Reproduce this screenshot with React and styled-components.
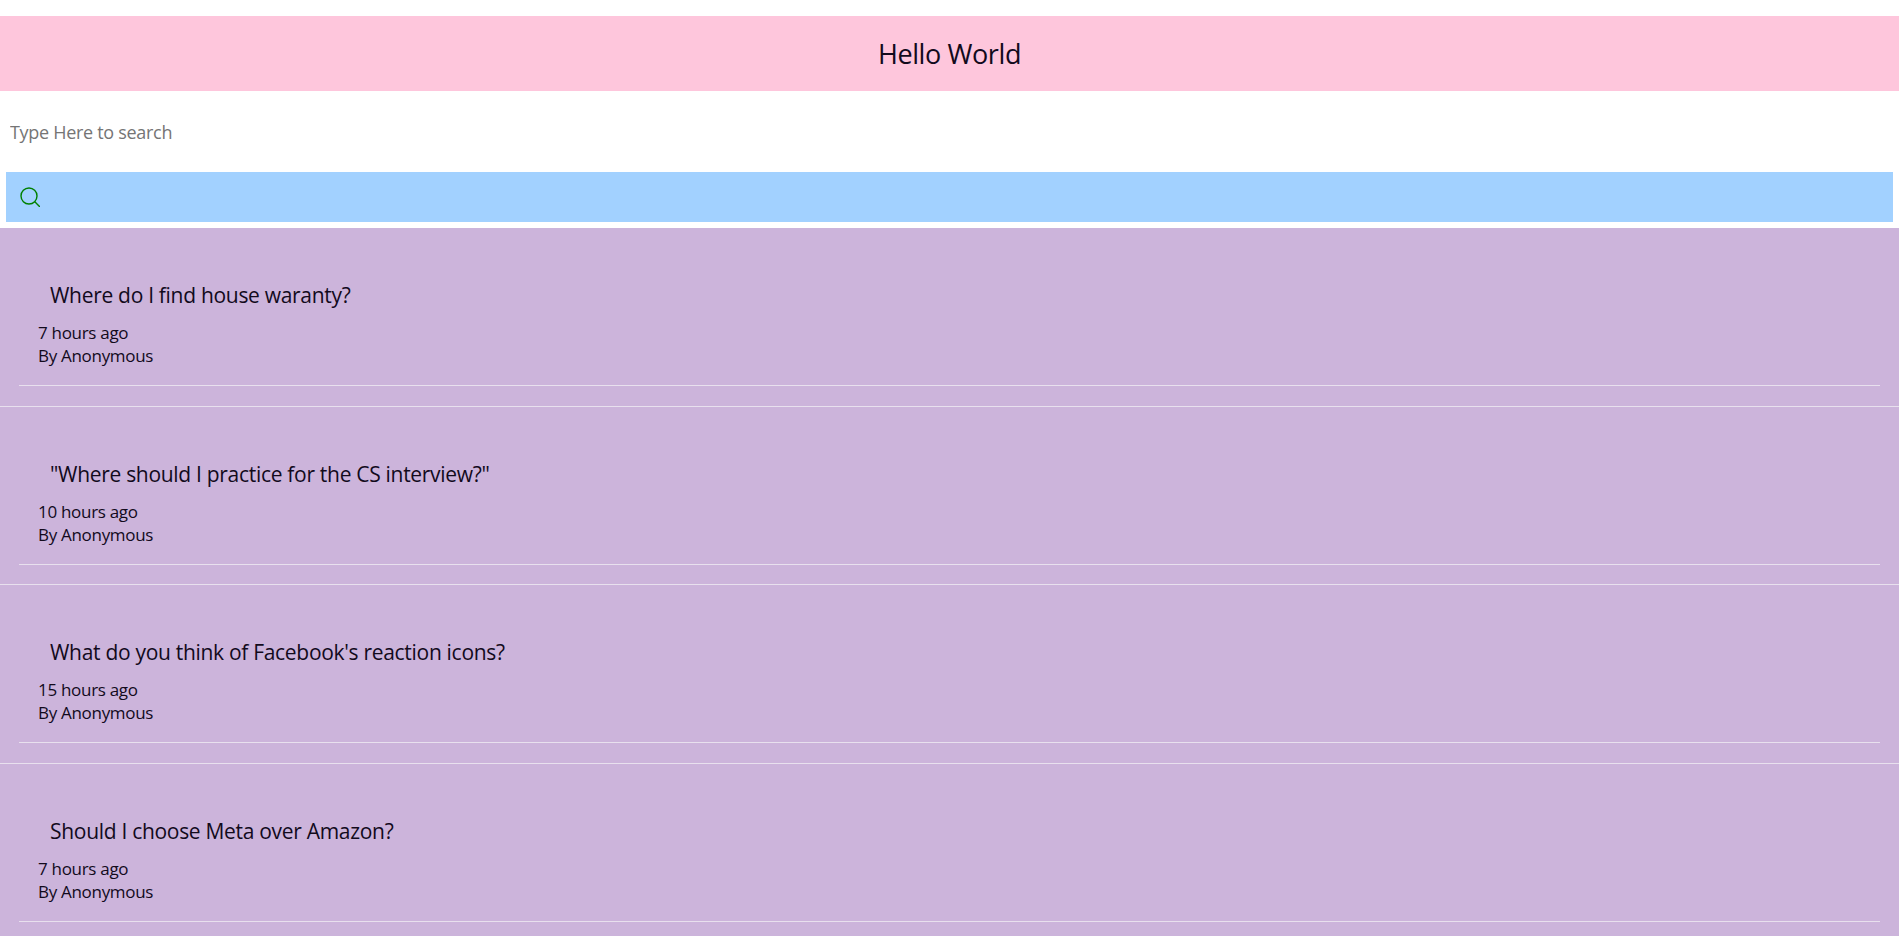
import React from 'react';
import styled, { createGlobalStyle } from 'styled-components';

const GlobalStyle = createGlobalStyle`
  html, body {
    margin: 0;
    padding: 0;
    background: #fff;
    font-family: "Open Sans", "Noto Sans", sans-serif;
    color: #120a1c;
    overflow: hidden;
  }
`;

const Page = styled.div`
  padding-top: 16px;
`;

const Header = styled.header`
  height: 75px;
  background: #fec6dc;
  display: flex;
  align-items: center;
  justify-content: center;
`;

const Title = styled.h1`
  margin: 0;
  font-size: 27px;
  font-weight: 400;
  letter-spacing: -0.4px;
`;

const SearchInput = styled.input`
  display: block;
  width: 100%;
  box-sizing: border-box;
  height: 81px;
  padding: 0 10px;
  border: 0;
  outline: 0;
  background: #fff;
  font: inherit;
  font-size: 18px;
  letter-spacing: -0.3px;

  &::placeholder {
    color: #757575;
    opacity: 1;
  }
`;

const SearchBar = styled.div`
  height: 50px;
  margin: 0 6px 6px;
  padding-left: 14px;
  background: #a2d1ff;
  display: flex;
  align-items: center;
`;

const SearchIcon = styled.svg`
  width: 20px;
  height: 20px;
  fill: none;
  stroke: green;
  stroke-width: 1.4;
`;

const List = styled.div`
  background: #ccb4db;
`;

const Card = styled.article`
  height: 178.5px;
  box-sizing: border-box;
  padding: 0 19px 19.5px;
  border-bottom: 1px solid #e8e0ee;
  display: flex;
  flex-direction: column;
  justify-content: flex-end;
`;

const Question = styled.h2`
  margin: 0 0 12px 31px;
  font-size: 21px;
  font-weight: 400;
  letter-spacing: -0.3px;
  line-height: 28px;
`;

const Meta = styled.div`
  margin-left: 19px;
  font-size: 17px;
  letter-spacing: -0.3px;
  line-height: 23px;
`;

const Rule = styled.hr`
  margin: 18px 0 0;
  border: 0;
  border-top: 1px solid #e8e0ee;
`;

const questions = [
  { text: 'Where do I find house waranty?', time: '7 hours ago' },
  { text: '"Where should I practice for the CS interview?"', time: '10 hours ago' },
  { text: "What do you think of Facebook's reaction icons?", time: '15 hours ago' },
  { text: 'Should I choose Meta over Amazon?', time: '7 hours ago' },
];

export default function App() {
  return (
    <Page>
      <GlobalStyle />
      <Header>
        <Title>Hello World</Title>
      </Header>
      <SearchInput placeholder="Type Here to search" />
      <SearchBar>
        <SearchIcon viewBox="0 0 20 20">
          <circle cx="9" cy="9" r="8" />
          <path d="M14.8 14.8 L20 20" />
        </SearchIcon>
      </SearchBar>
      <List>
        {questions.map((q) => (
          <Card key={q.text}>
            <Question>{q.text}</Question>
            <Meta>{q.time}</Meta>
            <Meta>By Anonymous</Meta>
            <Rule />
          </Card>
        ))}
      </List>
    </Page>
  );
}
